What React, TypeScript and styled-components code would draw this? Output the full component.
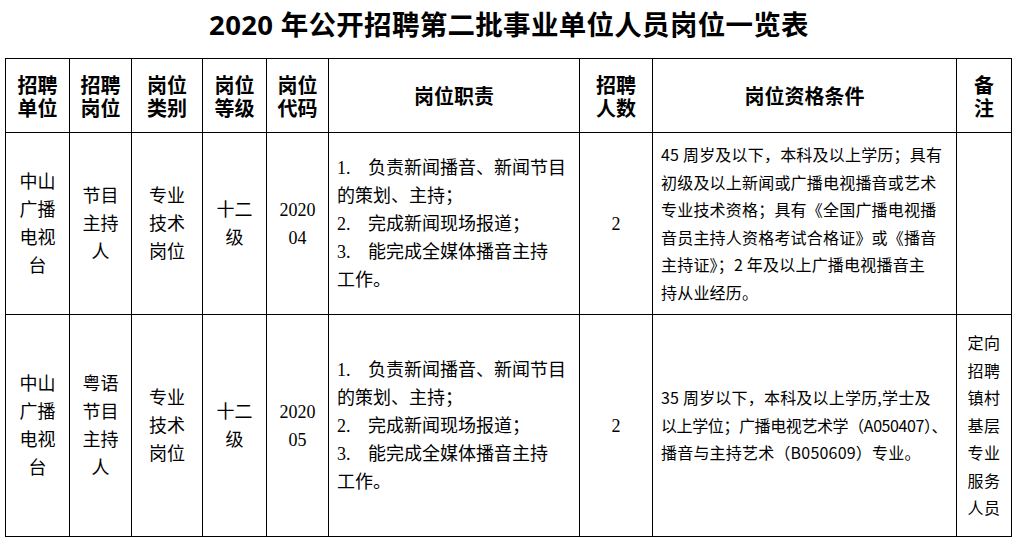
import React from "react";
import styled, { createGlobalStyle } from "styled-components";

const Global = createGlobalStyle`
  html, body { margin: 0; padding: 0; background: #fff; }
  body { font-family: "Liberation Serif", "Noto Sans CJK SC", serif; color: #000; }
`;

const Page = styled.div`
  width: 1018px;
  height: 543px;
  overflow: hidden;
  background: #fff;
`;

const Title = styled.h1`
  margin: 0;
  box-sizing: border-box;
  height: 58px;
  padding-top: 8px;
  line-height: 34px;
  text-align: center;
  font-family: "Noto Sans", "Noto Sans CJK SC", sans-serif;
  font-size: 27.5px;
  font-weight: 700;
  letter-spacing: 0.3px;
`;

const Table = styled.table`
  margin-left: 5px;
  border-collapse: collapse;
  table-layout: fixed;
  width: 1007px;
`;

const Th = styled.th`
  border: 1px solid #000;
  height: 73px;
  padding: 0;
  text-align: center;
  vertical-align: middle;
  font-family: "Noto Sans CJK SC", sans-serif;
  font-weight: 700;
  font-size: 20px;
  line-height: 23px;
  white-space: nowrap;
`;

const Td = styled.td<{ $h: number; $align?: string; $variant?: "plain" | "qual" | "note" }>`
  border: 1px solid #000;
  height: ${(p) => p.$h}px;
  padding: 0 ${(p) => (p.$align === "left" ? "8px" : "0")};
  text-align: ${(p) => p.$align || "center"};
  vertical-align: middle;
  white-space: nowrap;
  font-family: ${(p) =>
    p.$variant === "qual" || p.$variant === "note"
      ? `"Noto Sans CJK SC", sans-serif`
      : `"Liberation Serif", "Noto Sans CJK SC", serif`};
  font-size: ${(p) => (p.$variant === "qual" || p.$variant === "note" ? "16px" : "18px")};
  letter-spacing: ${(p) => (p.$variant === "qual" ? "0.2px" : p.$variant === "note" ? "0.5px" : "0")};
  line-height: ${(p) => (p.$variant === "qual" || p.$variant === "note" ? "27.5px" : "28px")};
  font-weight: 400;
`;

const Num = styled.span`
  display: inline-block;
  width: 31px;
`;

const Tight = styled.span`
  letter-spacing: -0.4px;
`;

const cols = [64, 62, 71, 64, 62, 251, 73, 304, 55];

const Lines: React.FC<{ lines: React.ReactNode[] }> = ({ lines }) => (
  <>
    {lines.map((l, i) => (
      <React.Fragment key={i}>
        {i > 0 && <br />}
        {l}
      </React.Fragment>
    ))}
  </>
);

const Duties: React.FC = () => (
  <>
    <Num>1.</Num>负责新闻播音、新闻节目
    <br />
    的策划、主持；
    <br />
    <Num>2.</Num>完成新闻现场报道；
    <br />
    <Num>3.</Num>能完成全媒体播音主持
    <br />
    工作。
  </>
);

const headers = [
  ["招聘", "单位"],
  ["招聘", "岗位"],
  ["岗位", "类别"],
  ["岗位", "等级"],
  ["岗位", "代码"],
  ["岗位职责"],
  ["招聘", "人数"],
  ["岗位资格条件"],
  ["备", "注"],
];

const rows = [
  {
    h: 181,
    post: ["节目", "主持", "人"],
    code: ["2020", "04"],
    qual: [
      "45 周岁及以下，本科及以上学历；具有",
      "初级及以上新闻或广播电视播音或艺术",
      "专业技术资格；具有《全国广播电视播",
      "音员主持人资格考试合格证》或《播音",
      "主持证》；2 年及以上广播电视播音主",
      "持从业经历。",
    ] as React.ReactNode[],
    note: [] as string[],
  },
  {
    h: 221,
    post: ["粤语", "节目", "主持", "人"],
    code: ["2020", "05"],
    qual: [
      "35 周岁以下，本科及以上学历,学士及",
      <Tight key="t">以上学位；广播电视艺术学（A050407）、</Tight>,
      "播音与主持艺术（B050609）专业。",
    ] as React.ReactNode[],
    note: ["定向", "招聘", "镇村", "基层", "专业", "服务", "人员"],
  },
];

export default function App() {
  return (
    <Page>
      <Global />
      <Title>2020 年公开招聘第二批事业单位人员岗位一览表</Title>
      <Table>
        <colgroup>
          {cols.map((w, i) => (
            <col key={i} style={{ width: w }} />
          ))}
        </colgroup>
        <thead>
          <tr>
            {headers.map((h, i) => (
              <Th key={i}>
                <Lines lines={h} />
              </Th>
            ))}
          </tr>
        </thead>
        <tbody>
          {rows.map((r, i) => (
            <tr key={i}>
              <Td $h={r.h}>
                <Lines lines={["中山", "广播", "电视", "台"]} />
              </Td>
              <Td $h={r.h}>
                <Lines lines={r.post} />
              </Td>
              <Td $h={r.h}>
                <Lines lines={["专业", "技术", "岗位"]} />
              </Td>
              <Td $h={r.h}>
                <Lines lines={["十二", "级"]} />
              </Td>
              <Td $h={r.h}>
                <Lines lines={r.code} />
              </Td>
              <Td $h={r.h} $align="left">
                <Duties />
              </Td>
              <Td $h={r.h}>2</Td>
              <Td $h={r.h} $align="left" $variant="qual">
                <Lines lines={r.qual} />
              </Td>
              <Td $h={r.h} $variant="note">
                <Lines lines={r.note} />
              </Td>
            </tr>
          ))}
        </tbody>
      </Table>
    </Page>
  );
}
